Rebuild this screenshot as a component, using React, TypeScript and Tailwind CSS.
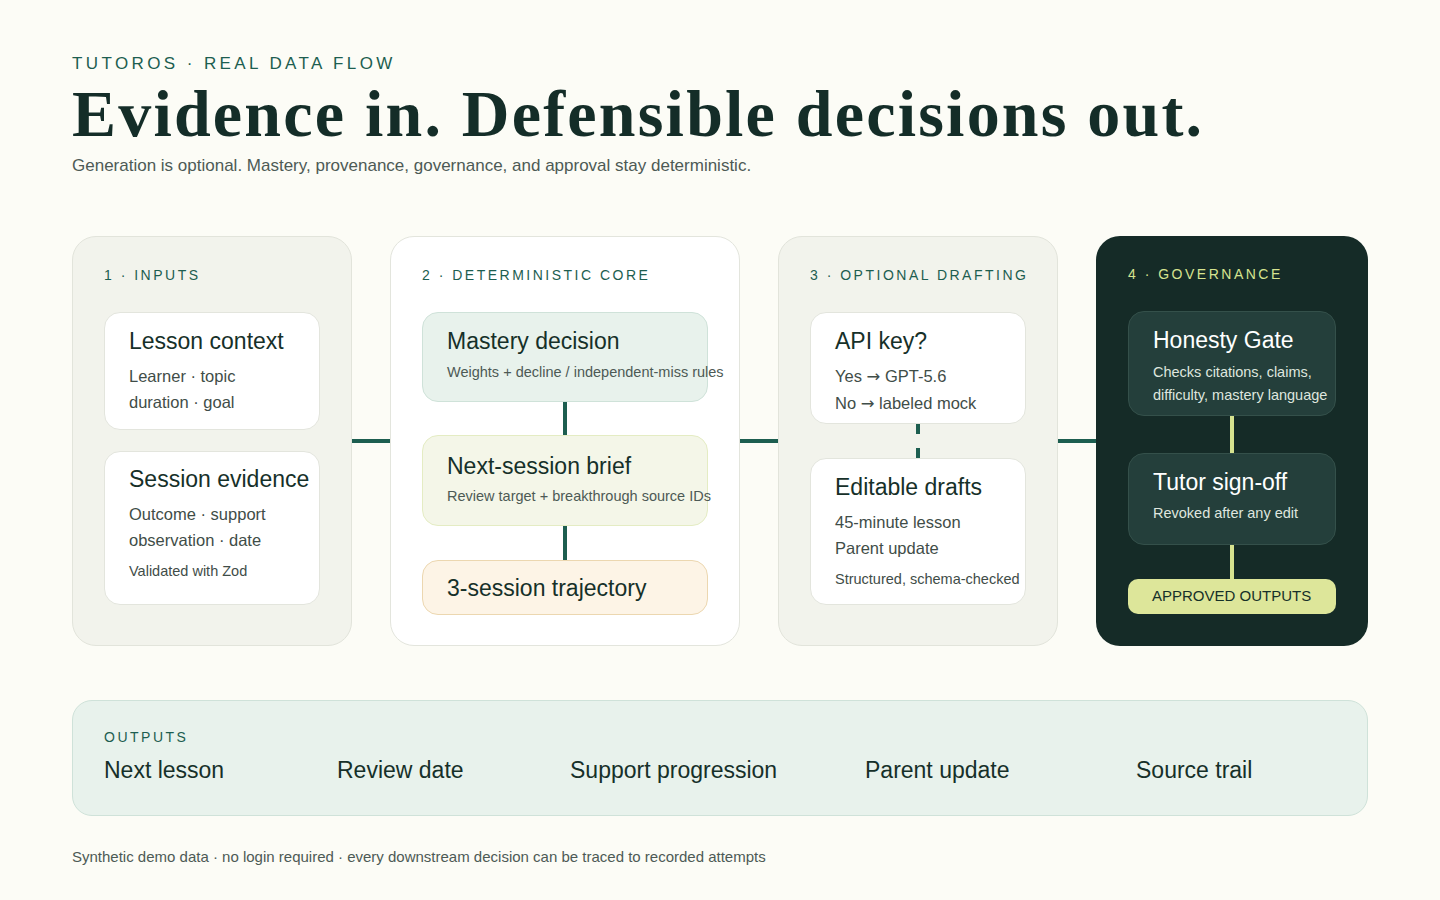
import React from "react";

const sans = { fontFamily: '"Liberation Sans", Arial, sans-serif' };

function Arrow() {
  return <span style={{ fontFamily: '"DejaVu Sans", sans-serif' }}>→</span>;
}

function Card({ title, lines, note, className = "" }: { title: string; lines?: React.ReactNode[]; note?: string; className?: string }) {
  return (
    <div className={`rounded-[16px] border px-6 ${className}`}>
      <div className="text-[23px] leading-[28px] whitespace-nowrap">{title}</div>
      {lines && (
        <div className="mt-[8px] text-[16.5px] leading-[26px] whitespace-nowrap text-[#3f4d48]">
          {lines.map((l, i) => (
            <div key={i}>{l}</div>
          ))}
        </div>
      )}
      {note && <div className="mt-[8px] text-[14.5px] leading-[20px] whitespace-nowrap text-[#3f4d48]">{note}</div>}
    </div>
  );
}

function VLine({ color, h, dashed }: { color: string; h: string; dashed?: boolean }) {
  return (
    <div className={`flex justify-center ${h}`}>
      {dashed ? (
        <div className="flex flex-col justify-between h-full">
          <div className={`w-[4px] h-[10px] ${color}`} />
          <div className={`w-[4px] h-[10px] ${color}`} />
        </div>
      ) : (
        <div className={`w-[4px] h-full ${color}`} />
      )}
    </div>
  );
}

function HConn() {
  return (
    <div className="w-[38px] flex items-center">
      <div className="w-full h-[4px] bg-[#1d5e50]" />
    </div>
  );
}

export default function App() {
  return (
    <div className="w-[1440px] h-[900px] bg-[#fcfcf6] text-[#163029] px-[72px] pt-[54px]" style={sans}>
      <div className="text-[17px] tracking-[3.4px] text-[#1d5e50] leading-[20px]">TUTOROS · REAL DATA FLOW</div>
      <h1 className="mt-[6px] text-[66px] leading-[68px] font-bold text-[#142d28] tracking-[2.2px]" style={{ fontFamily: '"Liberation Serif", "Times New Roman", serif' }}>
        Evidence in. Defensible decisions out.
      </h1>
      <div className="mt-[8px] text-[17px] text-[#4d5a55] leading-[20px]">
        Generation is optional. Mastery, provenance, governance, and approval stay deterministic.
      </div>

      <div className="mt-[60px] flex h-[410px]">
        <div className="w-[280px] rounded-[24px] bg-[#f2f3ec] border border-[#e2e4db] px-[31px] pt-[29px]">
          <div className="text-[14px] tracking-[2.5px] text-[#1d5e50] leading-[18px]">1 · INPUTS</div>
          <div className="mt-[28px] flex flex-col gap-[21px]">
            <Card className="bg-white border-[#e3e5dd] h-[118px] pt-[14px]" title="Lesson context" lines={["Learner · topic", "duration · goal"]} />
            <Card className="bg-white border-[#e3e5dd] h-[154px] pt-[13px]" title="Session evidence" lines={["Outcome · support", "observation · date"]} note="Validated with Zod" />
          </div>
        </div>
        <HConn />
        <div className="w-[350px] rounded-[24px] bg-white border border-[#e3e5dd] px-[31px] pt-[29px]">
          <div className="text-[14px] tracking-[2.5px] text-[#1d5e50] leading-[18px]">2 · DETERMINISTIC CORE</div>
          <div className="mt-[28px] flex flex-col">
            <div className="h-[90px] rounded-[16px] border border-[#cfe2d9] bg-[#e8f2ec] px-6 pt-[14px]">
              <div className="text-[23px] leading-[28px]">Mastery decision</div>
              <div className="mt-[7px] text-[14.5px] leading-[20px] text-[#4d5a55] whitespace-nowrap">Weights + decline / independent-miss rules</div>
            </div>
            <VLine color="bg-[#1d5e50]" h="h-[33px]" />
            <div className="h-[91px] rounded-[16px] border border-[#e4ecc3] bg-[#f4f6e8] px-6 pt-[16px]">
              <div className="text-[23px] leading-[28px]">Next-session brief</div>
              <div className="mt-[6px] text-[14.5px] leading-[20px] text-[#4d5a55] whitespace-nowrap">Review target + breakthrough source IDs</div>
            </div>
            <VLine color="bg-[#1d5e50]" h="h-[34px]" />
            <div className="h-[55px] rounded-[16px] border border-[#ecd7b0] bg-[#fdf4e6] px-6 flex items-center">
              <div className="text-[23px] leading-[28px]">3-session trajectory</div>
            </div>
          </div>
        </div>
        <HConn />
        <div className="w-[280px] rounded-[24px] bg-[#f2f3ec] border border-[#e2e4db] px-[31px] pt-[29px]">
          <div className="text-[14px] tracking-[2.5px] text-[#1d5e50] leading-[18px] whitespace-nowrap">3 · OPTIONAL DRAFTING</div>
          <div className="mt-[28px] flex flex-col">
            <Card className="bg-white border-[#e3e5dd] h-[112px] pt-[14px]" title="API key?" lines={[<>Yes <Arrow /> GPT-5.6</>, <>No <Arrow /> labeled mock</>]} />
            <VLine color="bg-[#1d5e50]" h="h-[34px]" dashed />
            <Card className="bg-white border-[#e3e5dd] h-[147px] pt-[14px]" title="Editable drafts" lines={["45-minute lesson", "Parent update"]} note="Structured, schema-checked" />
          </div>
        </div>
        <HConn />
        <div className="w-[272px] rounded-[24px] bg-[#152b27] px-[32px] pt-[29px]">
          <div className="text-[14px] tracking-[2.5px] text-[#d6e38f] leading-[18px]">4 · GOVERNANCE</div>
          <div className="mt-[28px] flex flex-col">
            <div className="h-[105px] rounded-[16px] border border-[#34504a] bg-[#243f3b] px-6 pt-[14px] text-white">
              <div className="text-[23px] leading-[28px]">Honesty Gate</div>
              <div className="mt-[7px] text-[14.5px] leading-[23px] text-[#dfe6df] whitespace-nowrap">
                <div>Checks citations, claims,</div>
                <div>difficulty, mastery language</div>
              </div>
            </div>
            <VLine color="bg-[#d6e38f]" h="h-[37px]" />
            <div className="h-[92px] rounded-[16px] border border-[#34504a] bg-[#243f3b] px-6 pt-[14px] text-white">
              <div className="text-[23px] leading-[28px]">Tutor sign-off</div>
              <div className="mt-[7px] text-[14.5px] leading-[20px] text-[#dfe6df]">Revoked after any edit</div>
            </div>
            <VLine color="bg-[#d6e38f]" h="h-[34px]" />
            <div className="h-[35px] rounded-[10px] bg-[#dde69a] px-6 flex items-center text-[15px] text-[#163029]">APPROVED OUTPUTS</div>
          </div>
        </div>
      </div>

      <div className="mt-[54px] h-[116px] rounded-[20px] bg-[#e8f2ec] border border-[#cfe2d9] px-[31px] pt-[27px]">
        <div className="text-[14px] tracking-[2.5px] text-[#1d5e50] leading-[18px]">OUTPUTS</div>
        <div className="mt-[10px] flex text-[23px] leading-[28px] text-[#163029]">
          <div className="w-[233px]">Next lesson</div>
          <div className="w-[233px]">Review date</div>
          <div className="w-[295px]">Support progression</div>
          <div className="w-[271px]">Parent update</div>
          <div>Source trail</div>
        </div>
      </div>

      <div className="mt-[32px] text-[15px] leading-[18px] text-[#4d5a55]">
        Synthetic demo data · no login required · every downstream decision can be traced to recorded attempts
      </div>
    </div>
  );
}
